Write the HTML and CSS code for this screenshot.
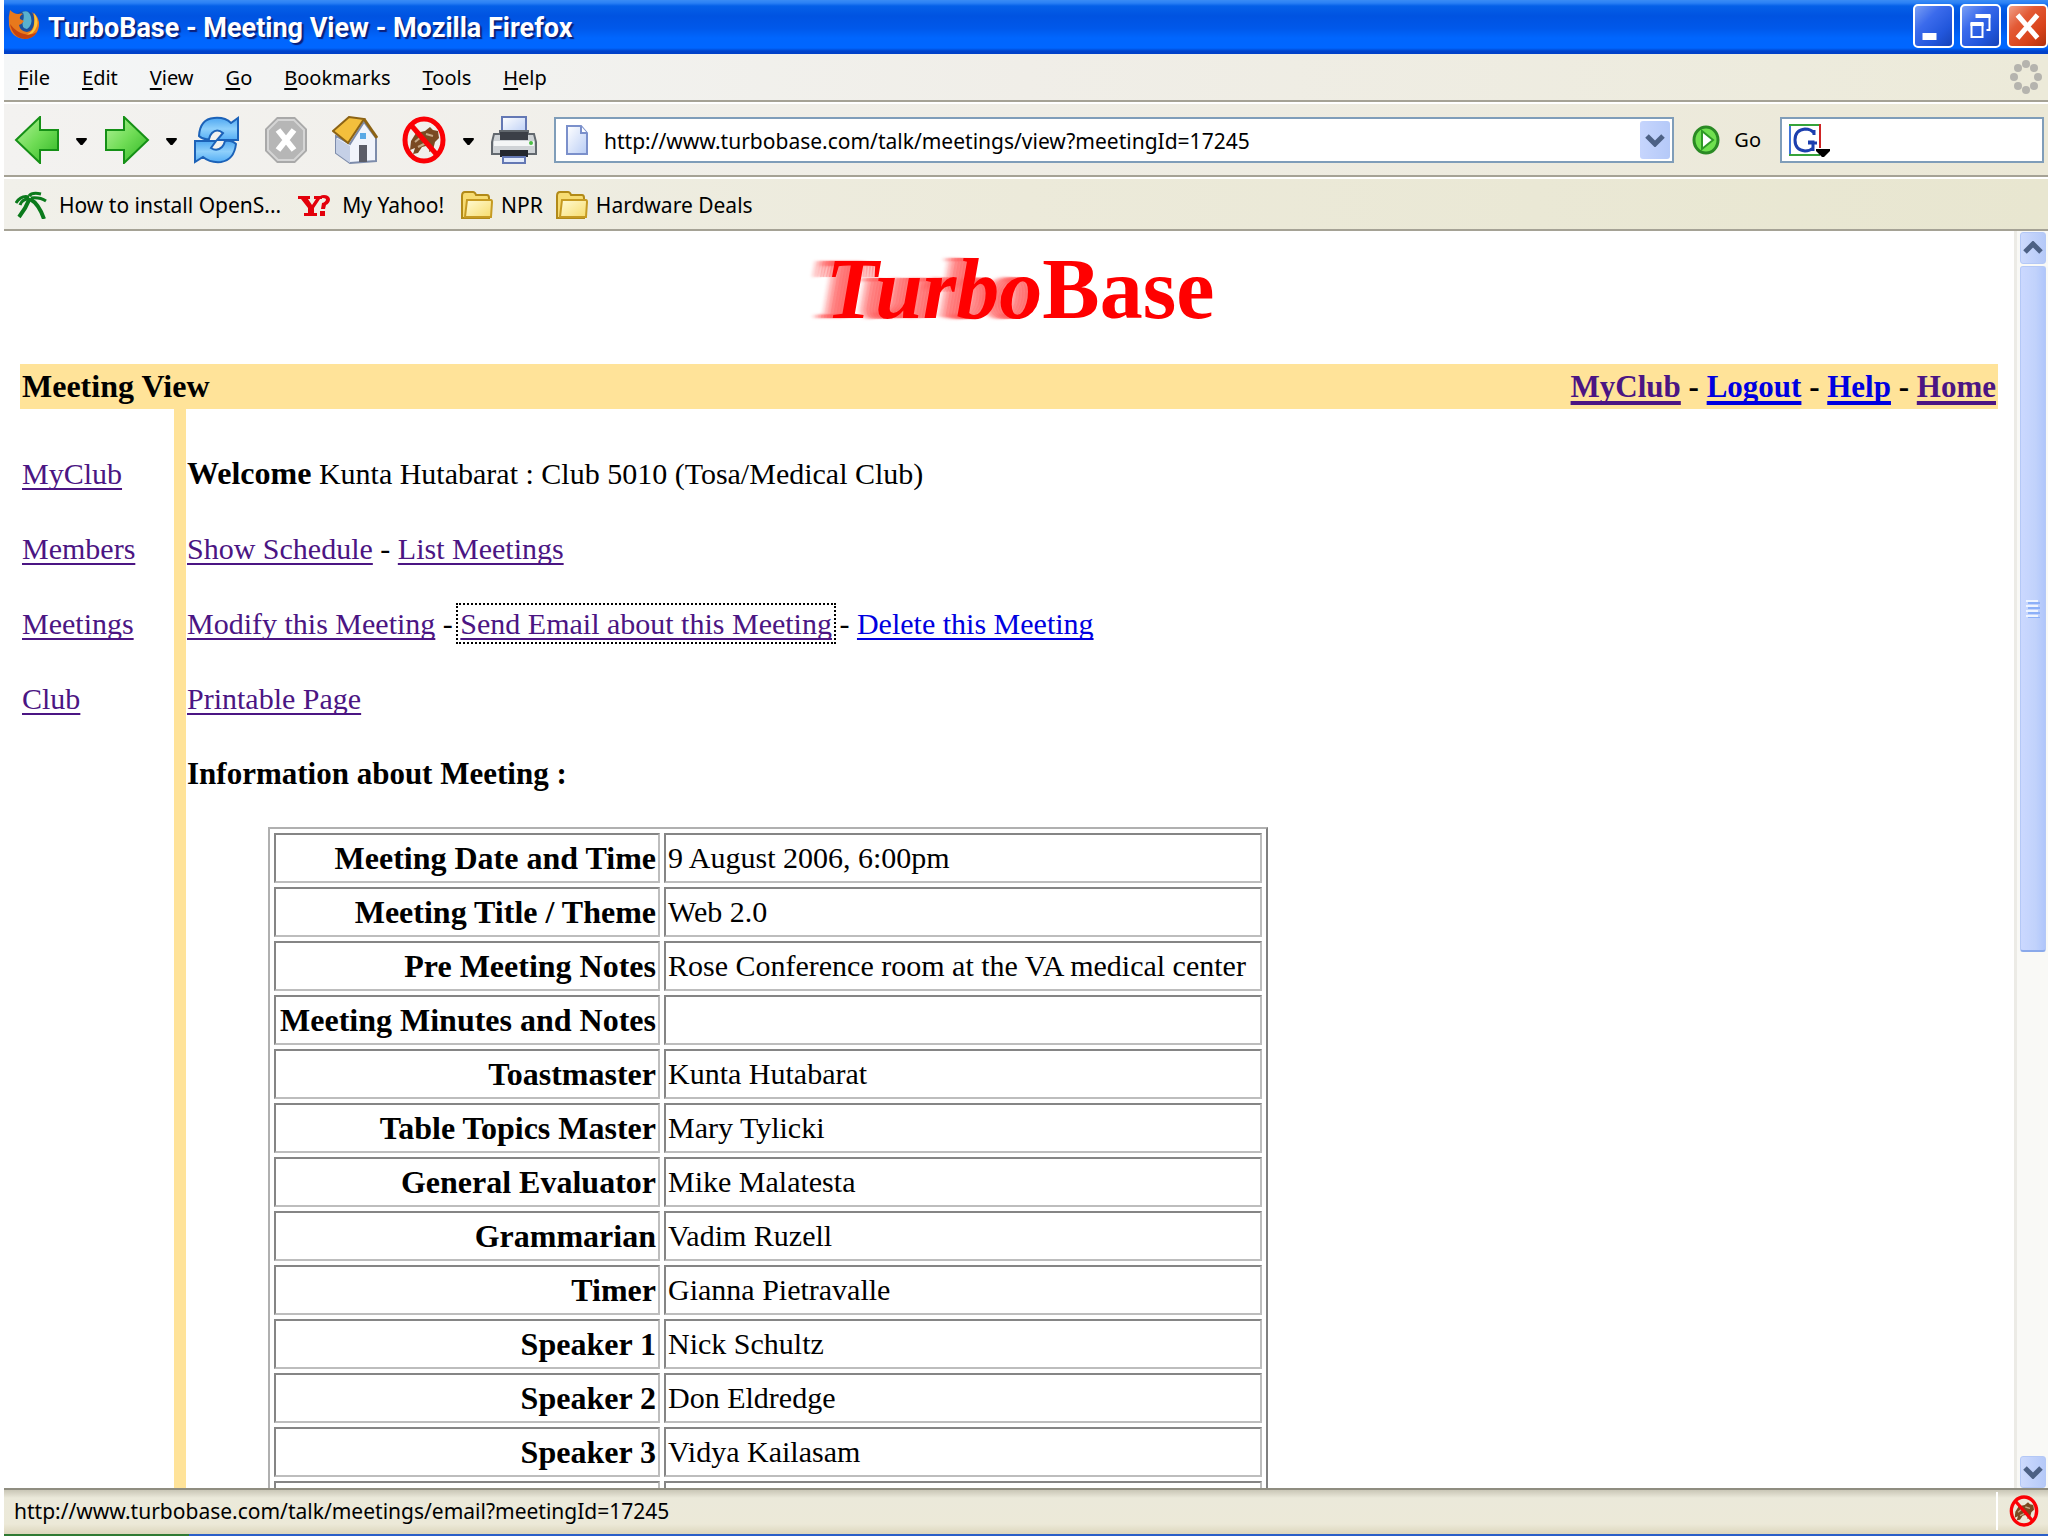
FILE: index.html
```html
<!DOCTYPE html>
<html lang="en">
<head>
<meta charset="utf-8">
<title>TurboBase - Meeting View - Mozilla Firefox</title>
<link rel="stylesheet" href="styles.css">
</head>
<body>
<svg class="defs" aria-hidden="true">
  <defs>
    <linearGradient id="green" x1="0" y1="0" x2="1" y2="1"><stop offset="0" stop-color="#b4f29a"/><stop offset=".5" stop-color="#6fdc55"/><stop offset="1" stop-color="#2fb524"/></linearGradient>
    <linearGradient id="blue" x1="0" y1="0" x2="0" y2="1"><stop offset="0" stop-color="#4fa8f2"/><stop offset=".5" stop-color="#8fd0fb"/><stop offset="1" stop-color="#55aef5"/></linearGradient>
    <linearGradient id="gold" x1="0" y1="0" x2="1" y2="1"><stop offset="0" stop-color="#fffbd6"/><stop offset="1" stop-color="#f7dc6c"/></linearGradient>
    <linearGradient id="paper" x1="0" y1="0" x2="1" y2="1"><stop offset="0" stop-color="#ffffff"/><stop offset="1" stop-color="#b9cdf5"/></linearGradient>
    <symbol id="drop" viewBox="0 0 12 8"><path d="M0 0h12v2l-5 6H5L0 2z" fill="#000"/></symbol>
    <symbol id="chev" viewBox="0 0 20 14"><path d="M2 3l8 8 8-8" fill="none" stroke="#4d6185" stroke-width="5"/></symbol>
    <symbol id="blocked" viewBox="0 0 46 48">
      <path d="M10 25l5-8 9-2 5-4 3 3 5 1 1 7-4 4-2 8-4 2 1-7-8 2-4 6-5 1 2-6-5 2z" fill="#7a4a22"/>
      <path d="M14 26l6-5M25 18l7 2M17 31l8-4" stroke="#c6a987" stroke-width="2"/>
      <ellipse cx="23" cy="24" rx="19" ry="21" fill="none" stroke="#fb0005" stroke-width="5"/>
      <path d="M10 9l26 30" stroke="#fb0005" stroke-width="5"/>
    </symbol>
    <symbol id="folder" viewBox="0 0 32 28">
      <path d="M1 5q0-4 3-4h8q2 0 3 3h11q2 0 2 3v20H1z" fill="#f7dc72" stroke="#b28a18" stroke-width="2"/>
      <path d="M6 9h24q1 0 1 2l-1 15H4z" fill="url(#gold)" stroke="#c59a22" stroke-width="2"/>
    </symbol>
  </defs>
</svg>

<div class="window">
  <header class="titlebar">
    <svg class="fav" viewBox="0 0 32 32" aria-hidden="true">
      <circle cx="17" cy="15" r="12" fill="#1c4f9c"/>
      <path d="M14 4q7-3 9 5t-4 12q-6-1-4-8t-1-9" fill="#58b1cf"/>
      <path d="M2 2q4 4 8 4 4-1 5 0-4 2-3 5l4 2q-2 3-5 4 1 6 8 7 6-1 7-8t-2-12q8 5 7 14-2 12-14 13Q3 30 1 17 0 9 2 2z" fill="#e8791c"/>
      <path d="M26 5q5 6 3 13-3 9-11 9 7-3 8-9t0-13z" fill="#fbc63a"/>
      <path d="M2 16q3 14 15 15 8 0 12-7-6 4-13 2Q8 24 2 16z" fill="#c4430f"/>
    </svg>
    <h1 class="caption">TurboBase - Meeting View - Mozilla Firefox</h1>
    <div class="winbtns">
      <button class="winbtn" type="button" aria-label="Minimize"><svg viewBox="0 0 36 40"><path d="M7 27h14v7H7z" fill="#fff"/></svg></button>
      <button class="winbtn" type="button" aria-label="Restore"><svg viewBox="0 0 36 40"><path d="M14 10h13v14h-3" fill="none" stroke="#fff" stroke-width="2"/><path d="M13 8h15v4H13z" fill="#fff"/><path d="M9 18h11v13H9z" fill="none" stroke="#fff" stroke-width="2"/><path d="M8 16h13v4H8z" fill="#fff"/></svg></button>
      <button class="winbtn close" type="button" aria-label="Close"><svg viewBox="0 0 36 40"><path d="M8 9l20 23M28 9L8 32" fill="none" stroke="#fff" stroke-width="5"/></svg></button>
    </div>
  </header>

  <nav class="menubar" aria-label="Menu">
    <button type="button"><u>F</u>ile</button>
    <button type="button"><u>E</u>dit</button>
    <button type="button"><u>V</u>iew</button>
    <button type="button"><u>G</u>o</button>
    <button type="button"><u>B</u>ookmarks</button>
    <button type="button"><u>T</u>ools</button>
    <button type="button"><u>H</u>elp</button>
    <svg class="throbber" viewBox="0 0 34 36" aria-hidden="true"><g fill="#b5b4ae"><circle cx="17" cy="5" r="4"/><circle cx="25" cy="9" r="4"/><circle cx="29" cy="18" r="4"/><circle cx="25" cy="27" r="4"/><circle cx="17" cy="31" r="4"/><circle cx="9" cy="27" r="4"/><circle cx="5" cy="18" r="4"/><circle cx="9" cy="9" r="4"/></g></svg>
  </nav>

  <div class="toolbar">
    <div class="tools">
      <button type="button" aria-label="Back"><svg class="ico" viewBox="0 0 46 48"><path d="M2 24L26 1v13h18v20H26v13z" fill="url(#green)" stroke="#159016" stroke-width="2"/></svg></button>
      <button class="dd" type="button" aria-label="Back history"><svg><use href="#drop"/></svg></button>
      <button type="button" aria-label="Forward"><svg class="ico" viewBox="0 0 46 48"><path d="M44 24L20 1v13H2v20h18v13z" fill="url(#green)" stroke="#159016" stroke-width="2"/></svg></button>
      <button class="dd" type="button" aria-label="Forward history"><svg><use href="#drop"/></svg></button>
      <button type="button" aria-label="Reload"><svg class="ico" viewBox="0 0 46 48"><g fill="url(#blue)" stroke="#1c62b8" stroke-width="2"><path d="M5 20Q6 3 20 2q11-1 17 5l7-5v22H23l6-7q-6-5-11 0-2 2-3 6-6 1-10-3z"/><path d="M42 28q-2 16-15 18-11 1-18-5l-8 5V25h21l-5 7q6 4 11-1 2-2 3-6 7-1 11 3z"/></g></svg></button>
      <button type="button" aria-label="Stop"><svg class="ico" viewBox="0 0 46 48"><path d="M14 1h18l12 12v22L32 47H14L2 35V13z" fill="#a9a9a9"/><path d="M15 4h16l10 10v20L31 44H15L5 34V14z" fill="#b6b6b6" stroke="#d5d5d5" stroke-width="2"/><path d="M15 14l16 20M31 14L15 34" stroke="#fff" stroke-width="6"/></svg></button>
      <button type="button" aria-label="Home"><svg class="ico" viewBox="0 0 46 48"><path d="M4 20l14 8L32 6l12 16v23l-26 2L4 37z" fill="#f1f4fb" stroke="#7d8cab" stroke-width="2"/><path d="M4 22l14 8v17L4 37z" fill="#c5d0e6"/><path d="M27 29h8v17h-8z" fill="#5b5d68"/><path d="M28 17h6v6h-6z" fill="#5aa9e6"/><path d="M1 15L17 1l15 2-16 24z" fill="#f3bf3c" stroke="#8c6314" stroke-width="2"/><path d="M32 3l13 19" stroke="#8c6314" stroke-width="3"/></svg></button>
      <button type="button" aria-label="Flash block"><svg class="ico"><use href="#blocked"/></svg></button>
      <button class="dd" type="button" aria-label="Flash block options"><svg><use href="#drop"/></svg></button>
      <button type="button" aria-label="Print"><svg class="ico" viewBox="0 0 46 48"><path d="M11 1h24v17H11z" fill="url(#paper)" stroke="#6478b4" stroke-width="2"/><path d="M3 18h6v-3h28v3h6l2 8v12H1V26z" fill="#cfd3d6" stroke="#62686e" stroke-width="2"/><path d="M9 16h28v8H9z" fill="#3b3f47"/><path d="M3 25h40v5H3z" fill="#f4f6f6"/><path d="M9 34h28v7H9z" fill="#24272d"/><path d="M12 41h22v6H12z" fill="#e3ebfb" stroke="#6478b4" stroke-width="2"/><circle cx="40" cy="27" r="2" fill="#4bbf45"/></svg></button>
    </div>
    <div class="field address">
      <svg class="page" viewBox="0 0 24 30" aria-hidden="true"><path d="M2 1h14l6 7v21H2z" fill="url(#paper)" stroke="#7b90cb" stroke-width="2"/><path d="M16 1v7h6" fill="#fff" stroke="#7b90cb" stroke-width="2"/></svg>
      <input type="text" aria-label="Location" value="http://www.turbobase.com/talk/meetings/view?meetingId=17245">
      <button class="combo" type="button" aria-label="Show history"><svg><use href="#chev"/></svg></button>
    </div>
    <button class="go" type="button">
      <svg viewBox="0 0 28 30" aria-hidden="true"><ellipse cx="14" cy="15" rx="12" ry="13" fill="#6fe04f" stroke="#2a8a24" stroke-width="3"/><path d="M10 6l11 9-11 9z" fill="#fff" stroke="#2e9a25" stroke-width="2"/></svg>
      Go
    </button>
    <div class="field search">
      <button type="button" aria-label="Search engine"><svg viewBox="0 0 44 34"><path d="M2 33V2" stroke="#3f74d8" stroke-width="2"/><path d="M1 2h31M1 32h31" stroke="#35a33a" stroke-width="2"/><path d="M32 1v24" stroke="#cf2424" stroke-width="2"/><path d="M26 12V7M26 10q-3-4-9-4-10 1-10 11t10 11q5 0 8-3v-6h-5M20 20h9M25 19v9" fill="none" stroke="#1c3fae" stroke-width="3"/><path d="M28 26h14v2l-6 6h-2l-6-6z" fill="#000"/></svg></button>
      <input type="text" aria-label="Search">
    </div>
  </div>

  <nav class="bookmarks" aria-label="Bookmarks">
    <a href="#"><svg viewBox="0 0 32 28"><g fill="none" stroke="#0b7a1c" stroke-width="3"><path d="M14 6Q6 4 1 12M14 8q-7 0-9 6"/><path d="M15 7Q11 17 4 26" stroke-width="4"/><path d="M14 5q3-4 12-2M16 7q9-1 15 3"/><path d="M15 8q9 5 14 20" stroke-width="4"/></g></svg>How to install OpenS...</a>
    <a href="#"><svg viewBox="0 0 32 28"><path d="M0 5h12v3h-2l4 6 4-6h-2V5h8v3h-2l-6 9v5h3v3H6v-3h4v-5L3 8H0z" fill="#e3000b"/><path d="M21 8q0-4 5-4t6 4q0 4-4 6l-1 4h-4l1-6q4-1 4-4-3-2-7 0zM22 20h5v5h-5z" fill="#e3000b"/></svg>My Yahoo!</a>
    <a href="#" class="dir"><svg><use href="#folder"/></svg>NPR</a>
    <a href="#" class="dir"><svg><use href="#folder"/></svg>Hardware Deals</a>
  </nav>

  <div class="viewport">
    <main class="doc">
      <p class="logo"><i>Turbo</i>Base</p>
      <div class="band">
        <h2>Meeting View</h2>
        <p><a href="#" class="seen">MyClub</a> - <a href="#">Logout</a> - <a href="#">Help</a> - <a href="#" class="seen">Home</a></p>
      </div>
      <div class="cols">
        <nav class="side" aria-label="Club">
          <a href="#" class="seen">MyClub</a>
          <a href="#" class="seen">Members</a>
          <a href="#" class="seen">Meetings</a>
          <a href="#" class="seen">Club</a>
        </nav>
        <section class="body">
          <p><b>Welcome</b> Kunta Hutabarat : Club 5010 (Tosa/Medical Club)</p>
          <p><a href="#" class="seen">Show Schedule</a> - <a href="#" class="seen">List Meetings</a></p>
          <p><a href="#" class="seen">Modify this Meeting</a> - <a href="#" class="seen focused">Send Email about this Meeting</a> - <a href="#">Delete this Meeting</a></p>
          <p><a href="#" class="seen">Printable Page</a></p>
          <h3>Information about Meeting :</h3>
          <table class="info">
            <tr><th scope="row">Meeting Date and Time</th><td>9 August 2006, 6:00pm</td></tr>
            <tr><th scope="row">Meeting Title / Theme</th><td>Web 2.0</td></tr>
            <tr><th scope="row">Pre Meeting Notes</th><td>Rose Conference room at the VA medical center</td></tr>
            <tr><th scope="row">Meeting Minutes and Notes</th><td></td></tr>
            <tr><th scope="row">Toastmaster</th><td>Kunta Hutabarat</td></tr>
            <tr><th scope="row">Table Topics Master</th><td>Mary Tylicki</td></tr>
            <tr><th scope="row">General Evaluator</th><td>Mike Malatesta</td></tr>
            <tr><th scope="row">Grammarian</th><td>Vadim Ruzell</td></tr>
            <tr><th scope="row">Timer</th><td>Gianna Pietravalle</td></tr>
            <tr><th scope="row">Speaker 1</th><td>Nick Schultz</td></tr>
            <tr><th scope="row">Speaker 2</th><td>Don Eldredge</td></tr>
            <tr><th scope="row">Speaker 3</th><td>Vidya Kailasam</td></tr>
            <tr><th scope="row"></th><td></td></tr>
          </table>
        </section>
      </div>
    </main>
    <div class="scrollbar">
      <button class="sb up" type="button" aria-label="Scroll up"><svg><use href="#chev"/></svg></button>
      <div class="thumb"><svg viewBox="0 0 14 18" aria-hidden="true"><path d="M0 1h12M0 6h12M0 11h12M0 16h12" stroke="#eef4ff" stroke-width="2"/><path d="M2 3h12M2 8h12M2 13h12M2 18h12" stroke="#8cb0f8" stroke-width="2"/></svg></div>
      <div class="rest"></div>
      <button class="sb" type="button" aria-label="Scroll down"><svg><use href="#chev"/></svg></button>
    </div>
  </div>

  <footer class="status">
    <span>http://www.turbobase.com/talk/meetings/email?meetingId=17245</span>
    <div class="tray"><svg aria-hidden="true"><use href="#blocked"/></svg></div>
  </footer>
  <div class="taskbar"></div>
</div>
</body>
</html>
```
FILE: styles.css
```css
* { box-sizing: border-box; }
body {
  margin: 0;
  background: #fff;
  color: #000;
  font-family: "Noto Sans", "Open Sans", sans-serif;
  font-size: 21px;
}
button {
  margin: 0;
  padding: 0;
  border: 0;
  background: none;
  color: inherit;
  font: inherit;
}
svg { display: block; }
p, h1, h2, h3 { margin: 0; }
.defs { position: absolute; width: 0; height: 0; }

.window {
  display: flex;
  flex-direction: column;
  height: 100vh;
  padding-left: 4px;
  overflow: hidden;
}

/* Title bar */
.titlebar {
  display: flex;
  align-items: center;
  flex: none;
  height: 54px;
  padding-left: 4px;
  background: linear-gradient(#3a8cf5 0, #2a80f5 3px, #0560e8 6px, #0053e1 16px, #0058ea 28px, #0066fe 38px, #0066ff 48px, #0044cc 51px, #003fc8 54px);
}
.fav { width: 32px; height: 32px; margin-bottom: 6px; }
.caption {
  flex: 1;
  padding: 2px 0 0 8px;
  color: #fff;
  font: bold 27px/52px Roboto, "Noto Sans", sans-serif;
  text-shadow: 2px 2px 1px #0a1f7a;
}
.winbtns { display: flex; gap: 6px; margin-bottom: 2px; }
.winbtn {
  width: 41px;
  height: 44px;
  border: 2px solid #fff;
  border-radius: 5px;
  background: linear-gradient(135deg, #7a9ff5, #3b6bec 35%, #2257dc 70%, #1643b8);
}
.winbtn.close { background: linear-gradient(135deg, #f0a088, #e35a35 35%, #d9431a 70%, #b0320e); }
.winbtn svg { width: 100%; height: 100%; }

/* Menus and toolbars */
.menubar, .toolbar, .bookmarks {
  display: flex;
  align-items: center;
  flex: none;
}
.menubar {
  gap: 32px;
  height: 48px;
  padding: 0 5px 0 14px;
  border-bottom: 2px solid #a5a295;
  background: linear-gradient(90deg, #f4f6f7, #f0eee8 50%, #ecead9);
  font-size: 20px;
}
.menubar u { text-decoration-thickness: 2px; text-underline-offset: 3px; }
.throbber { width: 34px; height: 36px; margin-left: auto; }
.toolbar {
  height: 75px;
  padding: 0 4px 0 10px;
  border-top: 2px solid #fff;
  border-bottom: 2px solid #a5a295;
  background: linear-gradient(90deg, #f3f2f0, #efede5 50%, #ebe8d6);
}
.tools { display: flex; align-items: center; }
.tools button { width: 46px; margin-right: 23px; }
.tools button:last-child { margin-right: 17px; }
.tools .dd { width: 12px; margin: 4px 16px 0 -7px; }
.tools .dd + button + button:not(.dd) { margin-left: 0; }
.tools .dd svg { width: 11px; height: 7px; }
.ico { width: 46px; height: 48px; }
.field {
  display: flex;
  align-items: center;
  height: 46px;
  border: 2px solid #7f9db9;
  background: #fff;
}
.field input {
  flex: 1;
  min-width: 0;
  padding: 2px 0 0;
  border: 0;
  outline: 0;
  background: none;
  font: inherit;
}
.address { flex: 1; padding: 2px 2px 2px 9px; }
.page { width: 24px; height: 30px; margin-right: 15px; }
.combo {
  display: flex;
  align-items: center;
  justify-content: center;
  width: 30px;
  height: 38px;
  border-radius: 3px;
  background: linear-gradient(90deg, #c6d5fd, #b5c9f8);
}
.combo svg, .sb svg { width: 20px; height: 14px; }
.go {
  display: flex;
  align-items: center;
  gap: 14px;
  padding: 0 19px 0 18px;
  font-size: 20px;
}
.go svg { width: 28px; height: 32px; }
.search { width: 264px; padding-left: 6px; }
.search svg { width: 44px; height: 34px; }
.bookmarks {
  gap: 17px;
  height: 54px;
  padding: 2px 11px 0;
  border-top: 2px solid #fff;
  border-bottom: 2px solid #a5a295;
  background: linear-gradient(90deg, #f1f0ea, #eceada 50%, #e8e6d0);
}
.bookmarks a {
  display: flex;
  align-items: center;
  gap: 12px;
  color: #000;
  text-decoration: none;
}
.bookmarks svg { width: 32px; height: 28px; }
.bookmarks .dir { gap: 8px; }
.bookmarks .dir + .dir { margin-left: -4px; }

/* Page area */
.viewport {
  display: flex;
  flex: 1;
  min-height: 0;
}
.doc {
  display: flex;
  flex-direction: column;
  flex: 1;
  min-width: 0;
  padding: 0 16px;
  overflow: hidden;
  font: 30px/36px "Liberation Serif", "Times New Roman", serif;
}
.doc a {
  color: #0000e0;
  text-decoration: underline 2px;
  text-underline-offset: 4px;
  text-decoration-skip-ink: none;
}
.doc .seen { color: #4b1583; }
.doc b, .doc th { font-weight: bold; font-size: 32px; line-height: 32px; }
.logo {
  padding: 0 0 16px 22px;
  color: #f00;
  font-weight: bold;
  font-size: 86px;
  line-height: 117px;
  text-align: center;
}
.logo i {
  text-shadow:
    -3px 0 0 rgba(255, 90, 90, .4),
    -6px 0 1px rgba(255, 90, 90, .4),
    -9px 0 1px rgba(255, 90, 90, .35),
    -12px 0 1px rgba(255, 90, 90, .35),
    -15px 0 2px rgba(255, 90, 90, .3),
    -18px 0 2px rgba(255, 90, 90, .25),
    -21px 0 3px rgba(255, 90, 90, .2);
}
.band {
  display: flex;
  justify-content: space-between;
  padding: 0 2px;
  background: #ffe399;
  font-weight: bold;
  font-size: 31px;
  line-height: 45px;
}
.band h2 { font-size: 32px; }
.band a { text-decoration-thickness: 4px; }
.cols { display: flex; flex: 1; }
.side {
  display: flex;
  flex-direction: column;
  align-items: flex-start;
  gap: 39px;
  width: 166px;
  padding: 47px 0 0 2px;
  border-right: 12px solid #ffe399;
}
.body { padding: 47px 0 0 1px; }
.body p { margin-bottom: 39px; }
.body h3 { margin-bottom: 35px; font-size: 31px; }
.focused { outline: 2px dotted #000; outline-offset: 2px; }
.info {
  margin-left: 81px;
  border: 2px solid;
  border-color: #b0b0b0 #808080 #808080 #b0b0b0;
  border-spacing: 4px;
}
.info th, .info td {
  height: 50px;
  padding: 2px;
  border: 2px solid;
  border-color: #858585 #bdbdbd #bdbdbd #858585;
}
.info th { min-width: 386px; text-align: right; }
.info td { min-width: 598px; }

/* Scroll bar */
.scrollbar {
  display: flex;
  flex-direction: column;
  flex: none;
  width: 34px;
  padding: 1px 2px 0 3px;
  border-left: 3px solid #ecebe6;
  background: #f9f9f6;
}
.sb, .thumb {
  display: flex;
  align-items: center;
  justify-content: center;
  flex: none;
  height: 32px;
  border: 1px solid #b4c8f6;
  border-radius: 3px;
  background: linear-gradient(90deg, #cddafd, #b5c9f8);
}
.up svg { transform: rotate(180deg); }
.thumb {
  flex: 684;
  margin-top: 2px;
  border-bottom: 2px solid #8aa9ea;
  background: linear-gradient(90deg, #cbd8ff, #c1d2fb 60%, #b0c6fb);
}
.thumb svg { width: 14px; height: 18px; }
.rest { flex: 504; }

/* Status bar */
.status {
  display: flex;
  align-items: center;
  flex: none;
  height: 46px;
  padding: 0 0 2px 10px;
  border-top: 2px solid #8f8d80;
  background: linear-gradient(#c9c6b6, #ebe9da 8px, #ece9d8 34px, #dcd6bc);
}
.status span { flex: 1; }
.tray {
  height: 38px;
  padding: 3px 8px 0 10px;
  border-left: 2px solid #fff;
}
.tray svg { width: 32px; height: 32px; }
.taskbar {
  flex: none;
  height: 2px;
  background: linear-gradient(90deg, #2f7a33 185px, #2a5fc8 185px);
}
```
